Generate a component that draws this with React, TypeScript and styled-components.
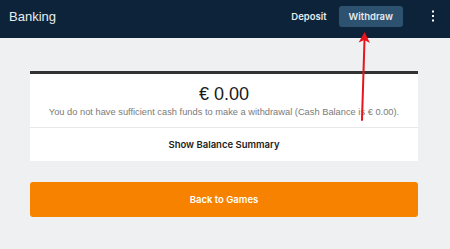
import React from "react";
import styled, { createGlobalStyle } from "styled-components";

const GlobalStyle = createGlobalStyle`
  html, body {
    margin: 0;
    padding: 0;
    background: #eff0f2;
    font-family: "Liberation Sans", Arial, sans-serif;
  }
`;

const labelFont = `"Inter", "Liberation Sans", sans-serif`;

const Page = styled.div`
  position: relative;
  width: 450px;
  height: 249px;
  overflow: hidden;
  background: #eff0f2;
`;

const Header = styled.header`
  display: flex;
  align-items: center;
  height: 38px;
  padding: 0 9px;
  box-sizing: border-box;
  background: #0c2339;
`;

const Title = styled.h1`
  flex: 1;
  margin: 0;
  font-size: 13px;
  font-weight: 400;
  color: #e9ecef;
  padding-bottom: 5px;
`;

const Nav = styled.nav`
  display: flex;
  align-items: center;
  gap: 2px;
  margin-top: -6px;
`;

const NavButton = styled.button<{ $active?: boolean }>`
  border: none;
  border-radius: 3px;
  height: 21px;
  padding: 0 10px;
  font-family: ${labelFont};
  font-size: 9.5px;
  font-weight: 600;
  color: #e6ebef;
  background: ${(p) => (p.$active ? "#2d5270" : "transparent")};
`;

const MenuButton = styled.button`
  border: none;
  background: transparent;
  margin-left: 22px;
  padding: 0 6px;
  color: #fff;
  display: flex;
  margin-top: -7px;
`;

const Main = styled.main`
  padding: 33px 32px 0 30px;
  display: flex;
  flex-direction: column;
  gap: 21px;
`;

const Card = styled.section`
  background: #fff;
  border-top: 3px solid #333;
`;

const Balance = styled.div`
  display: flex;
  flex-direction: column;
  align-items: center;
  padding: 9px 0;
  border-bottom: 1px solid #e6e8ea;
`;

const Amount = styled.div`
  font-size: 18px;
  color: #1a1a1a;
  line-height: 22px;
`;

const Note = styled.div`
  font-size: 9.3px;
  line-height: 12px;
  color: #7a7a7a;
  margin-top: 1px;
  white-space: nowrap;
`;

const SummaryRow = styled.button`
  display: block;
  width: 100%;
  border: none;
  background: transparent;
  height: 33px;
  padding: 0;
  font-family: ${labelFont};
  font-size: 9.5px;
  font-weight: 600;
  color: #1d1d1d;
`;

const BackButton = styled.button`
  height: 35px;
  border: none;
  border-radius: 3px;
  background: #f78200;
  color: #fff;
  font-family: ${labelFont};
  font-size: 9.5px;
  font-weight: 600;
`;

const Annotation = styled.svg`
  position: absolute;
  left: 0;
  top: 0;
  pointer-events: none;
`;

export default function App() {
  return (
    <>
      <GlobalStyle />
      <Page>
        <Header>
          <Title>Banking</Title>
          <Nav>
            <NavButton>Deposit</NavButton>
            <NavButton $active>Withdraw</NavButton>
          </Nav>
          <MenuButton aria-label="menu">
            <svg width="4" height="12" viewBox="0 0 4 12">
              <rect x="1" y="0.5" width="2" height="2" fill="#fff" />
              <rect x="1" y="5" width="2" height="2" fill="#fff" />
              <rect x="1" y="9.5" width="2" height="2" fill="#fff" />
            </svg>
          </MenuButton>
        </Header>
        <Main>
          <Card>
            <Balance>
              <Amount>€ 0.00</Amount>
              <Note>
                You do not have sufficient cash funds to make a withdrawal (Cash Balance is € 0.00).
              </Note>
            </Balance>
            <SummaryRow>Show Balance Summary</SummaryRow>
          </Card>
          <BackButton>Back to Games</BackButton>
        </Main>
        <Annotation width="450" height="249" viewBox="0 0 450 249">
          <path d="M364.5 40 L362 120" stroke="#e8141b" strokeWidth="2" strokeLinecap="round" />
          <path d="M364.6 32 L370 43 L364.3 40 L358.6 42.5 Z" fill="#e8141b" />
        </Annotation>
      </Page>
    </>
  );
}
